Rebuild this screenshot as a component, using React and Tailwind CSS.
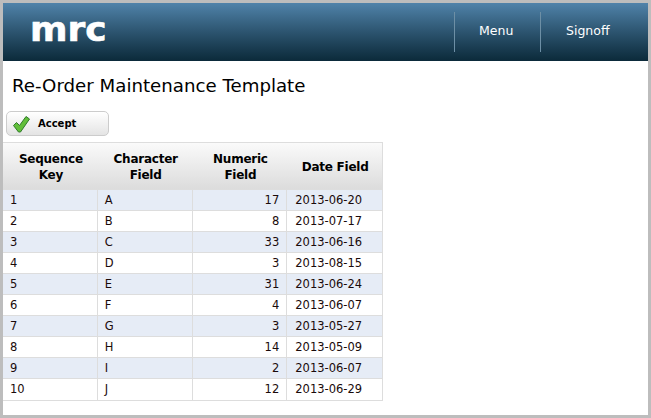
const ROWS = [
  ["1", "A", 17, "2013-06-20"],
  ["2", "B", 8, "2013-07-17"],
  ["3", "C", 33, "2013-06-16"],
  ["4", "D", 3, "2013-08-15"],
  ["5", "E", 31, "2013-06-24"],
  ["6", "F", 4, "2013-06-07"],
  ["7", "G", 3, "2013-05-27"],
  ["8", "H", 14, "2013-05-09"],
  ["9", "I", 2, "2013-06-07"],
  ["10", "J", 12, "2013-06-29"],
];

function HeaderCell({ children }) {
  return (
    <div className="flex w-[95px] items-center justify-center pt-[1px] pl-[1px] text-center text-[12px] leading-[16px] font-bold tracking-[-0.25px] text-black">
      {children}
    </div>
  );
}

export default function App() {
  return (
    <div className="h-[418px] w-[651px] border-[3px] border-[#bdbdbd] bg-white font-['DejaVu_Sans',Verdana,sans-serif]">
      {/* header */}
      <div className="flex h-[58px] items-center justify-between bg-gradient-to-b from-[#5083aa] to-[#0b2a3a]">
        <span className="mb-[6px] ml-[27px] origin-left scale-x-[1.09] text-[33px] leading-none font-bold tracking-[0px] text-white [-webkit-text-stroke:0.6px_white]">
          mrc
        </span>
        <div className="flex h-[40px]">
          <div className="w-[86px] border-l border-[#6d8fa5] pl-[24px] text-[12.5px] leading-[38px] text-white">
            Menu
          </div>
          <div className="w-[108px] border-l border-[#6d8fa5] pl-[25px] text-[12.5px] leading-[38px] text-white">
            Signoff
          </div>
        </div>
      </div>

      <h1 className="mt-[13px] ml-[9px] text-[18.2px] leading-[24px] font-normal text-black">
        Re-Order Maintenance Template
      </h1>

      {/* accept button */}
      <button className="mt-[13px] ml-[3px] flex h-[25px] w-[103px] items-center rounded-[5px] border border-[#cccccc] bg-gradient-to-b from-white to-[#e4e4e4] pl-[6px] text-[10px] font-bold text-black">
        <svg width="17" height="18" viewBox="0 0 17 18">
          <path
            d="M0.5 10.5 L3.5 7.5 L6.5 10.5 L13 1.5 L16.5 4 L7.5 17 L5.5 17 Z"
            fill="#62bf3a"
            stroke="#2f7a2a"
            strokeWidth="1"
            strokeLinejoin="round"
          />
        </svg>
        <span className="ml-[8px]">Accept</span>
      </button>

      {/* table */}
      <div className="mt-[6px] w-[380px] border-t border-r border-b border-[#dddddd]">
        <div className="flex h-[47px] border-b border-[#dddddd] bg-gradient-to-b from-[#fafafa] to-[#dcdcdc]">
          <HeaderCell>
            Sequence
            <br />
            Key
          </HeaderCell>
          <HeaderCell>
            Character
            <br />
            Field
          </HeaderCell>
          <HeaderCell>
            Numeric
            <br />
            Field
          </HeaderCell>
          <HeaderCell>Date Field</HeaderCell>
        </div>
        {ROWS.map((row, i) => (
          <div
            key={row[0]}
            className={`flex h-[21px] text-[11.5px] leading-[21px] text-[#1a0a0a] ${i % 2 === 0 ? "bg-[#e6ecf6]" : "bg-white"} ${i < 9 ? "border-b border-[#dddddd]" : ""}`}
          >
            <div className="w-[95px] border-r border-[#dddddd] pl-[7px]">{row[0]}</div>
            <div className="w-[95px] border-r border-[#dddddd] pl-[7px]">{row[1]}</div>
            <div className="w-[95px] border-r border-[#dddddd] pr-[7px] text-right">{row[2]}</div>
            <div className="w-[95px] pl-[8px]">{row[3]}</div>
          </div>
        ))}
      </div>
    </div>
  );
}
